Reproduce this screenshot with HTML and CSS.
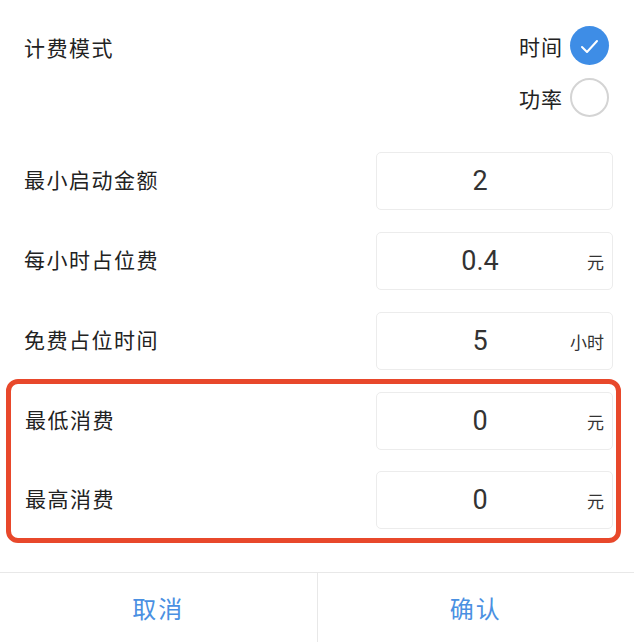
FILE: index.html
```html
<!DOCTYPE html>
<html lang="zh-CN">
<head>
    <meta charset="UTF-8">
    <meta name="viewport" content="width=device-width, initial-scale=1.0">
    <title>计费设置</title>
    <link rel="stylesheet" href="styles.css">
</head>
<body>
    <div class="dialog">
        <div class="mode-row">
            <div class="label mode-label">计费模式</div>
            <div class="radio-group">
                <div class="radio-option">
                    <span>时间</span>
                    <span class="radio checked">
                        <svg width="39" height="39" viewBox="0 0 39 39">
                            <polyline points="12,21 17,26 27,15" fill="none" stroke="#fff" stroke-width="2" stroke-linecap="round" stroke-linejoin="round"/>
                        </svg>
                    </span>
                </div>
                <div class="radio-option">
                    <span>功率</span>
                    <span class="radio"></span>
                </div>
            </div>
        </div>

        <div class="fields">
            <div class="field-row">
                <div class="label">最小启动金额</div>
                <div class="field"><div class="value">2</div></div>
            </div>
            <div class="field-row">
                <div class="label">每小时占位费</div>
                <div class="field"><div class="value">0.4</div><span class="unit">元</span></div>
            </div>
            <div class="field-row">
                <div class="label">免费占位时间</div>
                <div class="field"><div class="value">5</div><span class="unit">小时</span></div>
            </div>
        </div>

        <div class="fields highlight">
            <div class="field-row">
                <div class="label">最低消费</div>
                <div class="field"><div class="value">0</div><span class="unit">元</span></div>
            </div>
            <div class="field-row">
                <div class="label">最高消费</div>
                <div class="field"><div class="value">0</div><span class="unit">元</span></div>
            </div>
        </div>

        <div class="footer">
            <div class="footer-btn">取消</div>
            <div class="footer-btn">确认</div>
        </div>
    </div>
</body>
</html>
```

FILE: styles.css
```css
body {
    margin: 0;
    background: #fff;
    font-family: "Noto Sans CJK SC", "Noto Sans", sans-serif;
    color: #222;
}
.dialog {
    width: 634px;
    height: 642px;
    display: flex;
    flex-direction: column;
}
.label {
    font-size: 21px;
    letter-spacing: 1.5px;
    color: #222;
}
.mode-row {
    display: flex;
    justify-content: space-between;
    align-items: flex-start;
    padding: 26px 25px 0 24px;
}
.mode-label {
    line-height: 39px;
    padding-top: 2px;
}
.radio-group {
    display: flex;
    flex-direction: column;
    gap: 13px;
}
.radio-option {
    display: flex;
    align-items: center;
    gap: 7px;
    font-size: 21px;
    letter-spacing: 1px;
    color: #222;
}
.radio {
    width: 39px;
    height: 39px;
    border-radius: 50%;
    border: 2px solid #d4d4d4;
    box-sizing: border-box;
    display: block;
}
.radio.checked {
    background: #3e8de6;
    border: none;
}
.radio svg {
    display: block;
}
.fields {
    display: flex;
    flex-direction: column;
    gap: 22px;
    padding: 0 21px 0 24px;
    margin-top: 35px;
}
.field-row {
    display: flex;
    justify-content: space-between;
    align-items: center;
}
.field-row .label {
    padding-bottom: 5px;
}
.field {
    position: relative;
    width: 237px;
    height: 58px;
    border: 1px solid #ececec;
    border-radius: 5px;
    box-sizing: border-box;
    display: flex;
    align-items: center;
}
.value {
    flex: 1;
    text-align: center;
    padding-right: 29px;
    font-family: Roboto, "Liberation Sans", sans-serif;
    font-size: 27px;
    color: #333;
}
.unit {
    position: absolute;
    right: 8px;
    top: 50%;
    transform: translateY(-50%);
    font-size: 17px;
    color: #333;
}
.highlight {
    margin: 9px 13px 0 6px;
    padding: 8px 3px 9px 14px;
    border: 5px solid #e8482b;
    border-radius: 12px;
    gap: 21px;
}
.footer {
    margin-top: auto;
    height: 69px;
    border-top: 1px solid #e8e8e8;
    display: flex;
}
.footer-btn {
    flex: 1;
    display: flex;
    align-items: center;
    justify-content: center;
    font-size: 24px;
    letter-spacing: 2px;
    color: #4a90e2;
}
.footer-btn:first-child {
    border-right: 1px solid #e8e8e8;
}
```
